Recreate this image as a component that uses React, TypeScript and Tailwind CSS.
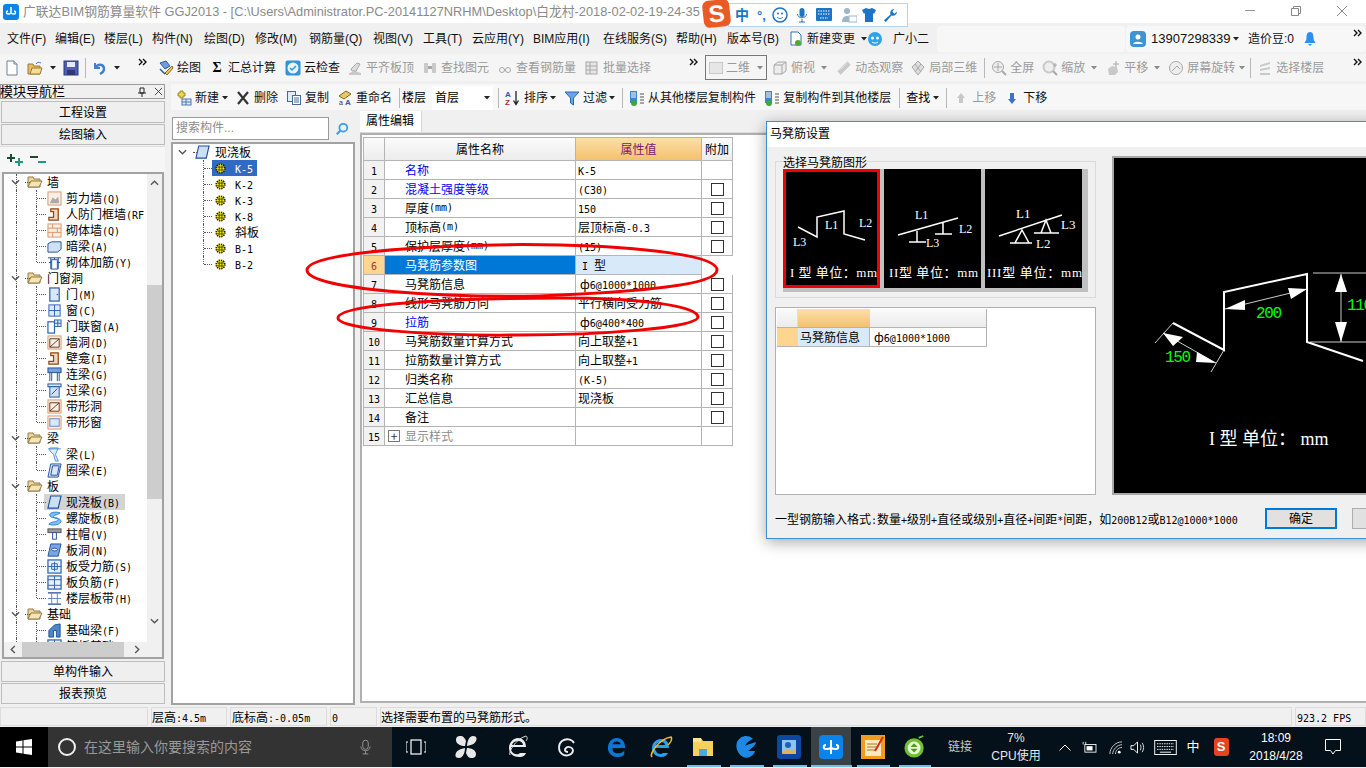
import React from "react";

const Sim = ({ t }: { t: string }) => (
  <>
    {t.split(/([\x00-\x7f]+)/).map((p, i) =>
      /^[\x00-\x7f]+$/.test(p) ? (
        <span key={i} className="text-[10px] [font-family:'DejaVu_Sans_Mono',monospace]">{p}</span>
      ) : (
        <span key={i}>{p}</span>
      )
    )}
  </>
);

const Ic = ({ children, cls = "w-4 h-4" }: { children: React.ReactNode; cls?: string }) => (
  <svg viewBox="0 0 16 16" className={"shrink-0 " + cls}>{children}</svg>
);

const Arrow = ({ cls = "", gray = false }: { cls?: string; gray?: boolean }) => (
  <svg viewBox="0 0 6 4" className={"w-[6px] h-[4px] shrink-0 " + cls}>
    <path d="M0 0h6L3 3.5z" fill={gray ? "#8a8a8a" : "#222"} />
  </svg>
);
const Sep = ({ cls = "" }: { cls?: string }) => <div className={"w-px h-5 bg-[#b8b8b8] shrink-0 " + cls} />;
const More = ({ cls = "" }: { cls?: string }) => (
  <svg viewBox="0 0 10 8" className={"w-[10px] h-2 shrink-0 " + cls}>
    <path d="M1 1l3 3-3 3M5 1l3 3-3 3" fill="none" stroke="#111" strokeWidth="1.4" />
  </svg>
);

const Tool = ({ icon, label, gray, cls = "" }: { icon: React.ReactNode; label: string; gray?: boolean; cls?: string }) => (
  <div className={"flex items-center shrink-0 " + cls + (gray ? " text-[#9a9a9a]" : " text-[#111]")}>
    <span className="w-4 h-4 -ml-[3px] mr-[3px] flex items-center justify-center shrink-0">{icon}</span>
    <span>{label}</span>
  </div>
);

const gFill = "#c9c9c9";
const gStroke = "#a8a8a8";
const I = {
  doc: <Ic><path d="M3 1h7l3 3v11H3z" fill="#fff" stroke="#6d7f95" /><path d="M10 1v3h3" fill="#dfe6ee" stroke="#6d7f95" /></Ic>,
  open: <Ic><path d="M1 4h5l1 2h6v8H1z" fill="#e6bc66" stroke="#9c7a30" /><path d="M3 14l2-6h10l-2 6z" fill="#f5dc98" stroke="#9c7a30" /><path d="M9 4c1-2 3-2 5-1" fill="none" stroke="#3c78c8" /></Ic>,
  save: <Ic><rect x="1" y="1" width="14" height="14" fill="#4d5fb4" stroke="#2d3a80" /><rect x="4" y="2" width="8" height="5" fill="#e6e9f5" /><rect x="4" y="10" width="8" height="5" fill="#30386e" /></Ic>,
  undo: <Ic><path d="M4 3v5h5" fill="none" stroke="#3f7fd2" strokeWidth="2" /><path d="M4 8c3-5 9-4 9 1 0 3-2 4-4 5" fill="none" stroke="#3f7fd2" strokeWidth="2.4" /></Ic>,
  draw: <Ic><path d="M2 3l6-2 4 5-5 3z" fill="#6f9fd8" stroke="#2c5a9a" /><path d="M7 13l7-7 1 2-6 7z" fill="#f0c050" stroke="#8a6a20" /><path d="M2 9l5 5" stroke="#2c5a9a" strokeWidth="1.5" /></Ic>,
  sum: <span className="font-bold text-[14px] leading-none [font-family:'Liberation_Serif',serif] text-black">Σ</span>,
  cloud: <Ic><rect x="0.5" y="0.5" width="15" height="15" rx="2" fill="#2f94dc" /><circle cx="8" cy="8" r="5.5" fill="#e9f5fd" /><path d="M5 8l2 2 4-4" fill="none" stroke="#2f94dc" strokeWidth="1.5" /></Ic>,
  g1: <Ic><path d="M2 13l6-2 6 2v2H2z" fill={gFill} /><path d="M4 9l6-6 3 1-4 7H5z" fill="#dcdcdc" stroke={gStroke} /></Ic>,
  g2: <Ic><rect x="2" y="3" width="4" height="10" rx="1" fill={gFill} /><rect x="10" y="3" width="4" height="10" rx="1" fill={gFill} /><rect x="6" y="6" width="4" height="3" fill={gStroke} /></Ic>,
  g3: <Ic><circle cx="5" cy="10" r="2.5" fill="none" stroke={gStroke} /><circle cx="11" cy="10" r="2.5" fill="none" stroke={gStroke} /><path d="M7 10h2" stroke={gStroke} /></Ic>,
  g4: <Ic><rect x="2" y="2" width="11" height="12" fill="#e6e6e6" stroke={gStroke} /><path d="M2 6h11M2 10h11M6 2v12" stroke={gStroke} /></Ic>,
  box: <Ic><path d="M2 5l4-3h8v9l-4 3H2z" fill="#ececec" stroke={gStroke} /><path d="M2 5h8v9M10 5l4-3" fill="none" stroke={gStroke} /></Ic>,
  orbit: <Ic><path d="M3 13L13 3" stroke={gFill} strokeWidth="5" /><path d="M2 10c3-1 8-5 9-8" fill="none" stroke="#e8e8e8" /></Ic>,
  cube3: <Ic><path d="M8 1l6 6-6 8-6-8z" fill="#ddd" stroke={gStroke} /><path d="M5 4l6 8M11 4l-6 8" stroke={gStroke} /></Ic>,
  zoomf: <Ic><circle cx="7" cy="7" r="5.5" fill="#eee" stroke={gStroke} /><path d="M7 3v8M3 7h8" stroke={gStroke} /><path d="M11 11l4 4" stroke={gStroke} strokeWidth="2" /></Ic>,
  zoom: <Ic><circle cx="7" cy="7" r="5.5" fill="#eee" stroke={gFill} strokeWidth="2" /><path d="M11 11l4 4" stroke={gStroke} strokeWidth="2" /><path d="M13 3v4M11 5h4" stroke={gStroke} /></Ic>,
  pan: <Ic><path d="M4 15l-1-6 4-3 5 1 1 5-3 3z" fill={gFill} /><path d="M11 1v6M8 4h6" stroke={gStroke} /></Ic>,
  rot: <Ic><circle cx="8" cy="8" r="6.5" fill="#eee" stroke={gStroke} /><path d="M4 11l5-5 3 3" fill="none" stroke={gStroke} /></Ic>,
  layers: <Ic><path d="M3 5l10-3v2L3 7zM3 9l10-2v2L3 11zM3 13h10v2H3z" fill={gFill} /></Ic>,
  nw: <Ic><path d="M4 1h3v2h2v3H7v2H4V6H2V3h2z" fill="#f2d64b" stroke="#a08820" /><rect x="6" y="9" width="9" height="6" fill="#dfeaf8" stroke="#5078b0" /><path d="M6 12h9M10 9v6" stroke="#5078b0" /></Ic>,
  del: <Ic><path d="M3 2l10 12M13 2L3 14" stroke="#333" strokeWidth="2.2" /></Ic>,
  copy: <Ic><rect x="1.5" y="1.5" width="8" height="10" fill="#e0ebf8" stroke="#44699c" /><rect x="6.5" y="5.5" width="8" height="9" fill="#fff" stroke="#44699c" /><path d="M8 8h5M8 10h5M8 12h5" stroke="#44699c" /></Ic>,
  ren: <Ic><path d="M2 6l7-5 5 3-7 5z" fill="#e8c860" stroke="#806a20" /><text x="2" y="15" fontSize="7" fill="#333">a</text><text x="8" y="15" fontSize="8" fontWeight="700" fill="#2a5ab0">A</text></Ic>,
  sort: <Ic><text x="0" y="7" fontSize="8" fontWeight="700" fill="#2858b0" fontFamily="Liberation Sans">A</text><text x="0" y="15" fontSize="8" fontWeight="700" fill="#a03030" fontFamily="Liberation Sans">Z</text><path d="M11 1v12M8.5 10.5l2.5 4 2.5-4" fill="none" stroke="#222" strokeWidth="1.3" /></Ic>,
  filter: <Ic><path d="M1 2h14L9.5 8v7l-3-2V8z" fill="#66a6e8" stroke="#2b69b8" /></Ic>,
  cpy1: <Ic><rect x="1" y="1" width="7" height="12" fill="#3c86d0" /><path d="M2 3h5M2 5h5M2 7h5" stroke="#fff" /><circle cx="5" cy="13" r="3" fill="#3aa83a" /><path d="M11 4h4M11 7h4M11 10h4M11 13h4" stroke="#555" /></Ic>,
  up: <Ic><path d="M8 3l4 5h-2v5H6V8H4z" fill="#c8c8c8" /></Ic>,
  down: <Ic><path d="M8 14l4-5h-2V3H6v6H4z" fill="#3f6fd0" /></Ic>,
};

const menu: [string, string][] = [
  ["文件(F)", "w-[48px]"], ["编辑(E)", "w-[49px]"], ["楼层(L)", "w-[48px]"], ["构件(N)", "w-[52px]"], ["绘图(D)", "w-[51px]"],
  ["修改(M)", "w-[54px]"], ["钢筋量(Q)", "w-[64px]"], ["视图(V)", "w-[50px]"], ["工具(T)", "w-[49px]"], ["云应用(Y)", "w-[61px]"],
  ["BIM应用(I)", "w-[70px]"], ["在线服务(S)", "w-[73px]"], ["帮助(H)", "w-[51px]"], ["版本号(B)", "w-[60px]"],
];

const Brick = ({ v }: { v: number }) => (
  <Ic cls="w-[15px] h-[15px]">
    <rect x="1" y="1" width="14" height="14" fill="#fbeee2" stroke="#d89468" />
    {v === 0 && <path d="M3 13l3-6 3 2 3-3 1 7z" fill="#aaa" />}
    {v === 1 && <path d="M1 5.5h14M1 10h14M6 1v4.5M11 5.5V10M6 10v5" stroke="#d89468" />}
    {v === 2 && <path d="M3 13L13 4M3 4h10v9H3z" fill="none" stroke="#5b3a20" />}
    {v === 3 && <rect x="3" y="4" width="10" height="8" fill="#dbe8fa" stroke="#5f86c8" />}
  </Ic>
);
const J = <Ic cls="w-[15px] h-[15px]"><path d="M4 2h8v12H2v-3h5V5H4z" fill="#f3d8bf" stroke="#8a4a18" strokeWidth="1.3" /></Ic>;
const Blue = ({ v }: { v: number }) => (
  <Ic cls="w-[15px] h-[15px]">
    {v === 0 && <path d="M1 14V5l4-2h10v8l-4 3z" fill="#cfe0f4" stroke="#1f4f9a" />}
    {v === 1 && <><path d="M1 3h14M2 8h12" stroke="#1f4f9a" /><path d="M4 3v12M8 3v12M12 3v12" stroke="#1f4f9a" /><rect x="5" y="5" width="6" height="10" fill="#fff" stroke="#1f4f9a" /></>}
    {v === 2 && <><rect x="3" y="1" width="10" height="14" fill="#dbe8fa" stroke="#2c62b0" strokeWidth="1.3" /><circle cx="11" cy="8" r="0.8" fill="#2c62b0" /></>}
    {v === 3 && <><rect x="2" y="2" width="12" height="12" fill="#dbe8fa" stroke="#2c62b0" /><path d="M8 2v12M2 8h12" stroke="#2c62b0" /></>}
    {v === 4 && <><rect x="1" y="3" width="7" height="12" fill="#fff" stroke="#2c62b0" strokeWidth="1.3" /><rect x="8" y="1" width="7" height="7" fill="#dbe8fa" stroke="#2c62b0" /><path d="M11.500 1v7M8 4.500h7" stroke="#2c62b0" /></>}
    {v === 5 && <><rect x="1" y="1" width="14" height="5" fill="#7aa0d8" stroke="#1f4f9a" /><path d="M3 6v9M5 6v9M11 6v9M13 6v9" stroke="#1f4f9a" /></>}
    {v === 6 && <><rect x="1" y="1" width="14" height="3" fill="#dbe8fa" stroke="#1f4f9a" /><rect x="3" y="4" width="10" height="11" fill="#cfe0f4" stroke="#1f4f9a" /><path d="M5 12l6-6" stroke="#1f4f9a" /></>}
    {v === 7 && <><path d="M3 1h9L9 8l3 7H9L7 8 3 4z" fill="#dcebfa" stroke="#4a90d8" /><path d="M1 2h14" stroke="#4a90d8" /></>}
    {v === 8 && <path d="M4 1h11l-3 14H1zM6 3h7l-2 10H4z" fill="#d8e6f8" stroke="#1f4f9a" />}
    {v === 9 && <path d="M4 1h11l-3 13H1z" fill="#cbdff6" stroke="#1f4f9a" strokeWidth="1.2" />}
    {v === 10 && <path d="M14 2C8 0 2 2 3 5c1 3 9 1 9 4s-8 2-10 5c4 2 12 1 13-3 0-4-8-2-8-5 0-2 5-2 7-4z" fill="#7ec0f0" stroke="#2b80d0" />}
    {v === 11 && <><rect x="1" y="2" width="14" height="4" fill="#999" stroke="#555" /><rect x="6" y="6" width="4" height="7" fill="#fff" stroke="#1f4f9a" /></>}
    {v === 12 && <><path d="M4 1h11l-3 13H1z" fill="#7aa6e0" stroke="#1f4f9a" /><ellipse cx="8" cy="7" rx="3" ry="1.500" fill="#fff" stroke="#1f4f9a" /></>}
    {v === 13 && <><rect x="1" y="1" width="14" height="14" fill="#e8f0fa" stroke="#2c62b0" strokeWidth="1.3" /><path d="M1 8h14M8 3v10" stroke="#2c62b0" /><path d="M5 5h6v6H5z" fill="none" stroke="#2c62b0" /></>}
    {v === 14 && <><rect x="1" y="1" width="14" height="14" fill="#e8f0fa" stroke="#2c62b0" strokeWidth="1.3" /><path d="M1 5h14M1 11h14M8 1v14" stroke="#2c62b0" /></>}
    {v === 15 && <><path d="M1 2h14M1 14h14" stroke="#1f4f9a" strokeWidth="1.5" /><path d="M5 2v12M11 2v12M1 8h14" stroke="#5a86c8" /></>}
    {v === 16 && <path d="M2 15V8l6-6 6-1v14h-4V8H7v7z" fill="#4d85c8" stroke="#1f4f9a" />}
  </Ic>
);

type T = { g?: boolean; t: string; i?: React.ReactNode; last?: boolean; sel?: boolean };
const leftTree: T[] = [
  { g: true, t: "墙" },
  { t: "剪力墙(Q)", i: <Brick v={0} /> },
  { t: "人防门框墙(RF", i: J },
  { t: "砌体墙(Q)", i: <Brick v={1} /> },
  { t: "暗梁(A)", i: <Blue v={0} /> },
  { t: "砌体加筋(Y)", i: <Blue v={1} />, last: true },
  { g: true, t: "门窗洞" },
  { t: "门(M)", i: <Blue v={2} /> },
  { t: "窗(C)", i: <Blue v={3} /> },
  { t: "门联窗(A)", i: <Blue v={4} /> },
  { t: "墙洞(D)", i: <Brick v={2} /> },
  { t: "壁龛(I)", i: J },
  { t: "连梁(G)", i: <Blue v={5} /> },
  { t: "过梁(G)", i: <Blue v={6} /> },
  { t: "带形洞", i: <Brick v={2} /> },
  { t: "带形窗", i: <Brick v={3} />, last: true },
  { g: true, t: "梁" },
  { t: "梁(L)", i: <Blue v={7} /> },
  { t: "圈梁(E)", i: <Blue v={8} />, last: true },
  { g: true, t: "板" },
  { t: "现浇板(B)", i: <Blue v={9} />, sel: true },
  { t: "螺旋板(B)", i: <Blue v={10} /> },
  { t: "柱帽(V)", i: <Blue v={11} /> },
  { t: "板洞(N)", i: <Blue v={12} /> },
  { t: "板受力筋(S)", i: <Blue v={13} /> },
  { t: "板负筋(F)", i: <Blue v={14} /> },
  { t: "楼层板带(H)", i: <Blue v={15} />, last: true },
  { g: true, t: "基础" },
  { t: "基础梁(F)", i: <Blue v={16} /> },
  { t: "筏板基础(M)", i: <Blue v={14} /> },
];

const Chev = ({ cls = "" }: { cls?: string }) => (
  <svg viewBox="0 0 10 6" className={"w-[9px] h-[6px] shrink-0 " + cls}>
    <path d="M1 1l4 4 4-4" fill="none" stroke="#555" strokeWidth="1.500" />
  </svg>
);
const Folder = () => (
  <svg viewBox="0 0 16 12" className="w-4 h-3 shrink-0">
    <path d="M1 1h5l1 2h6v8H1z" fill="#f2d58a" stroke="#8f7a50" />
    <path d="M1 11l3-6h11l-3 6z" fill="#f7e6b4" stroke="#8f7a50" />
  </svg>
);
const Dash = ({ cls }: { cls: string }) => <div className={"absolute border-[#555] border-dotted " + cls} />;

const LeftRow = ({ r, groupLine }: { r: T; groupLine: boolean }) => (
  <div className="relative h-4 flex items-center text-black text-[12px]">
    {groupLine && <Dash cls="left-[12px] top-0 h-4 border-l" />}
    {r.g ? (
      <>
        <Chev cls="ml-[7px]" />
        <Dash cls="left-[21px] top-[8px] w-[5px] border-t" />
        <span className="ml-[7px]"><Folder /></span>
        <span className="ml-[4px]"><Sim t={r.t} /></span>
      </>
    ) : (
      <>
        <Dash cls={r.last ? "left-[32px] top-0 h-2 border-l" : "left-[32px] top-0 h-4 border-l"} />
        <Dash cls="left-[33px] top-[8px] w-[9px] border-t" />
        <div className={"ml-[40px] flex items-center h-4 pl-[3px] w-[81px] " + (r.sel ? "bg-[#d4d4d4]" : "")}>
          {r.i}
          <span className="ml-[4px] whitespace-nowrap"><Sim t={r.t} /></span>
        </div>
      </>
    )}
  </div>
);

const Rebar = () => (
  <svg viewBox="0 0 12 12" className="w-[11px] h-[11px] shrink-0">
    <circle cx="6" cy="6" r="4.800" fill="#f7e600" stroke="#111" strokeWidth="1.500" strokeDasharray="1.500 1" />
    <path d="M2.500 4.500h7M2.500 7.500h7M4.500 2.500v7M7.500 2.500v7" stroke="#222" strokeWidth="0.800" />
  </svg>
);

const rows: { n: number; a: string; b: string; cb: boolean; c?: string; bx?: string }[] = [
  { n: 1, a: "名称", b: "K-5", cb: false, c: "text-[#0000ff]" },
  { n: 2, a: "混凝土强度等级", b: "(C30)", cb: true, c: "text-[#0000ff]" },
  { n: 3, a: "厚度(mm)", b: "150", cb: true },
  { n: 4, a: "顶标高(m)", b: "层顶标高-0.3", cb: true },
  { n: 5, a: "保护层厚度(mm)", b: "(15)", cb: true },
  { n: 6, a: "马凳筋参数图", b: "I 型", cb: false },
  { n: 7, a: "马凳筋信息", b: "ф6@1000*1000", cb: true, bx: "pl-[4px]" },
  { n: 8, a: "线形马凳筋方向", b: "平行横向受力筋", cb: true },
  { n: 9, a: "拉筋", b: "ф6@400*400", cb: true, c: "text-[#0000ff]", bx: "pl-[4px]" },
  { n: 10, a: "马凳筋数量计算方式", b: "向上取整+1", cb: true },
  { n: 11, a: "拉筋数量计算方式", b: "向上取整+1", cb: true },
  { n: 12, a: "归类名称", b: "(K-5)", cb: true },
  { n: 13, a: "汇总信息", b: "现浇板", cb: true },
  { n: 14, a: "备注", b: "", cb: true },
  { n: 15, a: "显示样式", b: "", cb: false, c: "text-[#8c8c8c]" },
];

const Row = ({ r }: { r: (typeof rows)[number] }) => {
  const sel = r.n === 6;
  return (
    <div className="flex h-[19px] text-[12px] leading-[18px] text-black">
      <div className={"w-[21px] border-r border-b border-[#b4b4b4] text-center " + (sel ? "bg-[#ffd58f] text-[#b03020]" : "bg-[#f2f2f2]")}><Sim t={String(r.n)} /></div>
      <div className={"w-[191px] border-r border-b border-[#b4b4b4] flex items-center whitespace-nowrap " + (sel ? "bg-[#0078d7] text-white pl-[20px]" : "pl-[20px] " + (r.c ?? ""))}>
        {r.n === 15 && (
          <span className="w-[12px] h-[12px] border border-[#777] -ml-[17px] mr-[5px] flex items-center justify-center text-[#333] text-[12px] leading-none">+</span>
        )}
        <Sim t={r.a} />
      </div>
      <div className={"w-[126px] border-r border-b border-[#b4b4b4] whitespace-nowrap overflow-hidden " + (sel ? "bg-[#d8e9f9] pl-[6px]" : r.bx ?? "pl-[2px]")}>
        <Sim t={r.b} />
      </div>
      {!sel && (
        <div className="w-[31px] border-r border-b border-[#b4b4b4] flex items-center justify-center">
          {r.cb && <span className="w-[13px] h-[13px] border border-[#333] bg-white ml-[1px]" />}
        </div>
      )}
    </div>
  );
};

const Thumb = ({ x, y, sel, children }: { x: number; y: number; sel?: boolean; children: React.ReactNode }) => (
  <svg viewBox={`${x} ${y} 97 119`} className={"w-[97px] h-[119px] shrink-0 bg-black"}>
    {children}
    {sel && <rect x={x + 1.5} y={y + 1.5} width="94" height="116" fill="none" stroke="#f00000" strokeWidth="3" />}
  </svg>
);
const TL = ({ x, y, t, s = 12 }: { x: number; y: number; t: string; s?: number }) => (
  <text x={x} y={y} fontSize={s} fill="#fff" fontFamily="Liberation Serif, Noto Sans CJK SC, serif">{t}</text>
);
const TB = ({ x, t, w }: { x: number; t: string; w: number }) => (
  <text x={x} y="277" fontSize="13" fill="#fff" fontFamily="Liberation Serif, Noto Sans CJK SC, serif" xmlSpace="preserve" textLength={w}>{t}</text>
);

const W = "#fff";
const Btn = ({ t }: { t: string }) => <div className="bg-[#efefef] border border-[#bdbdbd] flex items-center justify-center pt-px text-[12px] text-black h-full">{t}</div>;

export default function App() {
  const base = "[font-family:'Liberation_Sans','Noto_Sans_CJK_SC',sans-serif]";
  const sim = "[font-family:'Noto_Sans_CJK_SC',sans-serif]";
  return (
    <div className={"relative w-[1366px] h-[768px] overflow-hidden bg-[#f0f0f0] flex flex-col text-[12px] " + base}>
      {/* title bar */}
      <div className="h-[23px] bg-white flex items-center shrink-0">
        <div className="ml-[3px] w-4 h-4 rounded-[3px] bg-[#0a84e8] flex items-center justify-center">
          <svg viewBox="0 0 12 12" className="w-3 h-3"><path d="M6 1v6M3 5c-2 0-2 3 0 3s3-1 3-1 1 1 3 1 2-3 0-3" fill="none" stroke="#fff" strokeWidth="1.500" /></svg>
        </div>
        <div className="ml-[4px] text-[12.8px] text-[#8a8a8a] whitespace-nowrap">广联达BIM钢筋算量软件 GGJ2013 - [C:\Users\Administrator.PC-20141127NRHM\Desktop\白龙村-2018-02-02-19-24-35</div>
        <div className="ml-auto flex items-center mr-[19px] gap-[36px] -mt-[2px]">
          <div className="w-[10px] h-px bg-[#999]" />
          <svg viewBox="0 0 10 10" className="w-[10px] h-[10px]"><path d="M2.500 2.500V.5h7v7h-2M.5 2.500h7v7h-7z" fill="none" stroke="#888" /></svg>
          <svg viewBox="0 0 10 10" className="w-[10px] h-[10px]"><path d="M0 0l10 10M10 0L0 10" stroke="#888" /></svg>
        </div>
      </div>

      {/* menu */}
      <div className="h-[30px] pt-px flex items-center shrink-0 text-[#111] whitespace-nowrap pl-[7px]">
        {menu.map(([t, w]) => (<div key={t} className={w + " shrink-0"}>{t}</div>))}
        <svg viewBox="0 0 16 16" className="w-4 h-4 shrink-0 ml-[1px]"><path d="M3 1h7l3 3v10H3z" fill="#fff" stroke="#2f76c0" /><circle cx="10" cy="12" r="3" fill="#58a636" /></svg>
        <span className="ml-[3px] w-[49px] shrink-0">新建变更</span>
        <Arrow cls="ml-[5px]" />
        <svg viewBox="0 0 16 16" className="w-4 h-4 shrink-0"><circle cx="8" cy="8" r="7" fill="#2ba3ee" /><circle cx="5.500" cy="7" r="1.500" fill="#fff" /><circle cx="10.500" cy="7" r="1.500" fill="#fff" /><path d="M5 11c2 1.500 4 1.500 6 0" stroke="#fff" fill="none" /></svg>
        <span className="ml-[10px] shrink-0">广小二</span>
        <div className="ml-[8px] w-[188px] h-[26px] bg-[#f7f7f7] rounded-sm shrink-0" />
        <div className="ml-px flex-1 h-[26px] bg-[#f7f7f7] rounded-sm flex items-center">
          <div className="ml-[4px] w-4 h-4 rounded-sm bg-[#3d94d4] flex items-center justify-center shrink-0">
            <svg viewBox="0 0 12 12" className="w-3 h-3"><circle cx="6" cy="4" r="2.500" fill="#fff" /><path d="M1 11c1-3 9-3 10 0z" fill="#fff" /></svg>
          </div>
          <span className="ml-[5px] w-[76px] text-[13px] shrink-0">13907298339</span>
          <Arrow cls="ml-[6px]" />
          <span className="ml-[9px] shrink-0">造价豆:0</span>
          <svg viewBox="0 0 12 16" className="w-3 h-4 ml-[10px] shrink-0"><path d="M6 1c3 0 3.500 3 3.500 6s2 4 2 5h-11c0-1 2-2 2-5S3 1 6 1z" fill="#2c8ff0" /><path d="M4 13h4l-2 2z" fill="#2c8ff0" /></svg>
          <More cls="ml-[37px] -mt-3" />
        </div>
      </div>

      {/* toolbar 1 */}
      <div className="h-[27px] mt-px mb-[2px] flex items-center shrink-0 bg-[#f5f5f5] whitespace-nowrap">
        <span className="ml-[4px]">{I.doc}</span>
        <span className="ml-[7px]">{I.open}</span>
        <Arrow cls="ml-[7px]" />
        <span className="ml-[7px]">{I.save}</span>
        <Sep cls="ml-[6px]" />
        <span className="ml-[5px]">{I.undo}</span>
        <Arrow cls="ml-[7px]" />
        <More cls="ml-[18px] -mt-3" />
        <Tool cls="ml-[13px]" icon={I.draw} label="绘图" />
        <Tool cls="ml-[11px]" icon={I.sum} label="汇总计算" />
        <Tool cls="ml-[12px]" icon={I.cloud} label="云检查" />
        <Tool cls="ml-[10px]" gray icon={I.g1} label="平齐板顶" />
        <Tool cls="ml-[11px]" gray icon={I.g2} label="查找图元" />
        <Tool cls="ml-[11px]" gray icon={I.g3} label="查看钢筋量" />
        <Tool cls="ml-[11px]" gray icon={I.g4} label="批量选择" />
        <More cls="ml-[38px] -mt-3" />
        <div className="ml-[6px] w-[62px] h-[25px] border border-[#777] flex items-center text-[#9a9a9a] shrink-0">
          <span className="ml-[3px] w-[14px] h-[12px] bg-[#e6e6e6] border border-[#c8c8c8]" />
          <span className="ml-[3px]">二维</span>
          <Arrow gray cls="ml-[7px]" />
        </div>
        <Tool cls="ml-[8px]" gray icon={I.box} label="俯视" />
        <Arrow gray cls="ml-[6px]" />
        <Tool cls="ml-[12px]" gray icon={I.orbit} label="动态观察" />
        <Tool cls="ml-[10px]" gray icon={I.cube3} label="局部三维" />
        <Sep cls="ml-[7px]" />
        <Tool cls="ml-[9px]" gray icon={I.zoomf} label="全屏" />
        <Tool cls="ml-[11px]" gray icon={I.zoom} label="缩放" />
        <Arrow gray cls="ml-[6px]" />
        <Tool cls="ml-[11px]" gray icon={I.pan} label="平移" />
        <Arrow gray cls="ml-[6px]" />
        <Tool cls="ml-[11px]" gray icon={I.rot} label="屏幕旋转" />
        <Arrow gray cls="ml-[4px]" />
        <Sep cls="ml-[5px]" />
        <Tool cls="ml-[9px]" gray icon={I.layers} label="选择楼层" />
        <More cls="ml-[29px] -mt-3" />
      </div>

      {/* main */}
      <div className="h-[622px] flex shrink-0 pt-px">
        {/* left panel */}
        <div className="w-[165px] shrink-0 flex flex-col">
          <div className="h-[15px] border border-[#9a9a9a] bg-[#f0f0f0] flex items-center shrink-0">
            <span className="text-[13px] leading-none ml-[-1px]">模块导航栏</span>
            <svg viewBox="0 0 10 10" className="w-[10px] h-[10px] ml-[72px]"><path d="M3 1h4v5H3zM1 6h8M5 6v4" fill="none" stroke="#222" /></svg>
            <svg viewBox="0 0 10 10" className="w-[9px] h-[9px] ml-[7px]"><path d="M1 1l8 8M9 1L1 9" stroke="#333" /></svg>
          </div>
          <div className="h-[22px] mt-[2px] shrink-0 ml-px"><Btn t="工程设置" /></div>
          <div className="h-[21px] mt-px shrink-0 ml-px"><Btn t="绘图输入" /></div>
          <div className="h-[26px] mt-px shrink-0 flex items-center bg-[#f6f6f6] border-t border-[#ddd]">
            <svg viewBox="0 0 18 14" className="w-[18px] h-[14px] ml-[6px]"><path d="M5 1v8M1 5h8" stroke="#1d4a30" strokeWidth="2" /><path d="M13 5v8M9 9h8" stroke="#1f9a80" strokeWidth="2" /></svg>
            <svg viewBox="0 0 18 14" className="w-[18px] h-[14px] ml-[5px]"><path d="M1 4h8" stroke="#1d4a30" strokeWidth="2" /><path d="M9 9h8" stroke="#1f9a80" strokeWidth="2" /></svg>
          </div>
          <div className="h-[487px] shrink-0 ml-[2px] mr-px border-2 border-[#a2a2a2] flex flex-col bg-white">
            <div className="h-[468px] flex shrink-0 overflow-hidden">
              <div className={"w-[143px] shrink-0 overflow-hidden " + sim}>
                {leftTree.map((r, i) => {
                  const nextG = leftTree.slice(i + 1).findIndex((x) => x.g);
                  return <LeftRow key={i} r={r} groupLine={nextG >= 0 || i >= 27} />;
                })}
              </div>
              <div className="w-[15px] shrink-0 bg-[#f0f0f0] flex flex-col items-center">
                <svg viewBox="0 0 10 6" className="w-[9px] h-[6px] mt-[6px]"><path d="M1 5l4-4 4 4" fill="none" stroke="#555" strokeWidth="1.500" /></svg>
                <div className="w-full h-[214px] bg-[#cdcdcd] mt-[99px]" />
                <Chev cls="mt-[119px]" />
              </div>
            </div>
            <div className="h-[15px] bg-[#f0f0f0] flex items-center shrink-0">
              <svg viewBox="0 0 6 10" className="w-[6px] h-[9px] ml-[6px]"><path d="M5 1L1 5l4 4" fill="none" stroke="#555" strokeWidth="1.500" /></svg>
              <div className="w-[102px] h-full bg-[#cdcdcd] ml-[6px]" />
              <svg viewBox="0 0 6 10" className="w-[6px] h-[9px] ml-[10px]"><path d="M1 1l4 4-4 4" fill="none" stroke="#555" strokeWidth="1.500" /></svg>
            </div>
          </div>
          <div className="h-[21px] mt-[2px] shrink-0 ml-px"><Btn t="单构件输入" /></div>
          <div className="h-[21px] mt-px shrink-0 ml-px"><Btn t="报表预览" /></div>
        </div>

        {/* right column */}
        <div className="ml-[6px] flex-1 flex flex-col min-w-0">
          <div className="h-[26px] pt-px flex items-center shrink-0 bg-[#f7f7f7] whitespace-nowrap">
            <Tool cls="ml-[8px]" icon={I.nw} label="新建" />
            <Arrow cls="ml-[3px]" />
            <Tool cls="ml-[10px]" icon={I.del} label="删除" />
            <Tool cls="ml-[11px]" icon={I.copy} label="复制" />
            <Tool cls="ml-[11px]" icon={I.ren} label="重命名" />
            <Sep cls="ml-[7px]" />
            <span className="ml-[2px]">楼层</span>
            <div className="ml-[6px] w-[61px] h-[24px] bg-white flex items-center shrink-0">
              <span className="ml-[3px]">首层</span>
              <Arrow cls="ml-[25px]" />
            </div>
            <Sep cls="ml-[5px]" />
            <Tool cls="ml-[9px]" icon={I.sort} label="排序" />
            <Arrow cls="ml-[2px]" />
            <Tool cls="ml-[11px]" icon={I.filter} label="过滤" />
            <Arrow cls="ml-[2px]" />
            <Sep cls="ml-[7px]" />
            <Tool cls="ml-[9px]" icon={I.cpy1} label="从其他楼层复制构件" />
            <Tool cls="ml-[11px]" icon={I.cpy1} label="复制构件到其他楼层" />
            <Sep cls="ml-[8px]" />
            <span className="ml-[6px]">查找</span>
            <Arrow cls="ml-[3px]" />
            <Sep cls="ml-[7px]" />
            <Tool cls="ml-[9px]" gray icon={I.up} label="上移" />
            <Tool cls="ml-[11px]" icon={I.down} label="下移" />
          </div>
          <div className="flex-1 flex min-h-0">
            {/* component list */}
            <div className="w-[184px] shrink-0 flex flex-col">
              <div className="h-[23px] mt-[7px] flex items-center shrink-0">
                <div className="ml-px w-[157px] h-[23px] border border-[#9a9a9a] bg-white text-[#8c8c8c] pl-[3px] leading-[21px] text-[12px]">搜索构件...</div>
                <svg viewBox="0 0 16 16" className="w-[14px] h-[14px] ml-[6px]"><circle cx="9.500" cy="6.500" r="4.500" fill="#e4f3fd" stroke="#3f9ae0" strokeWidth="2" /><path d="M6 10l-4 4" stroke="#3f9ae0" strokeWidth="2.500" /></svg>
              </div>
              <div className={"h-[563px] mt-[2px] border-2 border-[#a2a2a2] bg-white shrink-0 " + sim}>
                <div className="h-4 flex items-center relative">
                  <Chev cls="ml-[5px]" />
                  <Dash cls="left-[20px] top-[8px] w-[4px] border-t" />
                  <span className="ml-[8px]"><Blue v={9} /></span>
                  <span className="ml-[5px]">现浇板</span>
                </div>
                {["K-5", "K-2", "K-3", "K-8", "斜板", "B-1", "B-2"].map((t, i) => (
                  <div key={t} className="h-4 flex items-center relative">
                    <Dash cls={i === 6 ? "left-[30px] top-0 h-2 border-l" : "left-[30px] top-0 h-4 border-l"} />
                    <Dash cls="left-[31px] top-[8px] w-[8px] border-t" />
                    <div className={"ml-[39px] flex items-center h-4 pl-[3px] " + (i === 0 ? "bg-[#2f6bc4] text-white w-[45px]" : "w-[45px] text-black")}>
                      <Rebar />
                      <span className="ml-[9px] whitespace-nowrap"><Sim t={t} /></span>
                    </div>
                  </div>
                ))}
              </div>
            </div>

            {/* properties */}
            <div className="flex-1 ml-[5px] flex flex-col min-w-0">
              <div className="h-[23px] shrink-0 flex items-end border-b border-[#dcdcdc]">
                <div className="w-[62px] h-[21px] bg-white border-r border-[#d8d8d8] pl-[6px] text-[12px] leading-[20px]">属性编辑</div>
              </div>
              <div className="h-[570px] bg-white border-t-2 border-l-2 border-b-2 border-[#b0b0b0] pt-[2px] pl-px shrink-0">
                <div className={"w-[370px] border-l border-t border-[#b4b4b4] " + sim}>
                  <div className="flex h-[23px] text-[12px] leading-[22px] text-black">
                    <div className="w-[21px] border-r border-b border-[#b4b4b4] bg-gradient-to-b from-[#fbfbfb] to-[#ececec]" />
                    <div className="w-[191px] border-r border-b border-[#b4b4b4] bg-gradient-to-b from-[#fbfbfb] to-[#ececec] text-center">属性名称</div>
                    <div className="w-[126px] border-r border-b border-[#b4b4b4] bg-gradient-to-b from-[#fbdfa9] to-[#f3c26b] text-center text-[#7a1a6e]">属性值</div>
                    <div className="w-[31px] border-r border-b border-[#b4b4b4] bg-gradient-to-b from-[#fbfbfb] to-[#ececec] text-center">附加</div>
                  </div>
                  {rows.map((r) => <Row key={r.n} r={r} />)}
                </div>
              </div>
            </div>
          </div>
        </div>
      </div>

      {/* status bar */}
      <div className="h-[22px] shrink-0 flex pt-[2px] pb-px gap-[3px] text-[12px] text-black">
        <div className="w-[148px] border border-[#dcdcdc]" />
        <div className={"w-[76px] border border-[#dcdcdc] leading-[17px] " + sim}><Sim t="层高:4.5m" /></div>
        <div className={"w-[97px] border border-[#dcdcdc] pl-px leading-[17px] " + sim}><Sim t="底标高:-0.05m" /></div>
        <div className={"w-[47px] border border-[#dcdcdc] pl-px leading-[17px] " + sim}><Sim t="0" /></div>
        <div className={"w-[912px] border border-[#dcdcdc] leading-[17px] " + sim}>选择需要布置的马凳筋形式。</div>
        <div className={"flex-1 border border-[#dcdcdc] pl-px leading-[17px] " + sim}><Sim t="923.2 FPS" /></div>
      </div>

      {/* taskbar */}
      <div className="h-[40px] shrink-0 bg-[#05111a] flex items-center text-white relative">
        <div className="w-[48px] h-full bg-black flex items-center justify-center">
          <svg viewBox="0 0 16 16" className="w-4 h-4"><path d="M0 2.500l6.500-1v6H0zM7.500 1.300L16 0v7.500H7.500zM0 8.500h6.500v6L0 13.500zM7.500 8.500H16V16l-8.500-1.300z" fill="#fff" /></svg>
        </div>
        <div className="w-[344px] h-full bg-[#333] flex items-center">
          <span className="ml-[10px] w-[18px] h-[18px] rounded-full border-2 border-[#eee]" />
          <span className="ml-[8px] pt-px text-[14px] text-[#999] w-[272px]">在这里输入你要搜索的内容</span>
          <svg viewBox="0 0 12 18" className="w-[11px] h-[17px] ml-[4px]"><rect x="3" y="1" width="6" height="10" rx="3" fill="none" stroke="#999" /><path d="M1 8c0 6 10 6 10 0M6 13v3M3 16h6" fill="none" stroke="#999" /></svg>
        </div>
        <div className="ml-[3px] w-[42px] flex justify-center">
          <svg viewBox="0 0 20 16" className="w-5 h-4"><rect x="5" y="1" width="10" height="14" fill="none" stroke="#fff" strokeWidth="1.200" /><path d="M2 3H0v10h2M18 3h2v10h-2" fill="none" stroke="#fff" /></svg>
        </div>
        <div className="w-[58px] flex justify-center">
          <svg viewBox="0 0 22 24" className="w-[22px] h-6"><path d="M10 11C6 11 1 9 1 5s3-4 5-4 4 2 5 5zM12 11c0-4 2-10 6-10s4 3 3 5-3 4-9 5zM12 13c4 0 9 2 9 6s-3 4-5 4-4-2-5-5zM10 13c0 4-2 10-6 10s-4-3-3-5 3-4 9-5z" fill="#e8e8e8" /></svg>
        </div>
        <div className="w-[46px] flex justify-center">
          <svg viewBox="0 0 22 24" className="w-[22px] h-6"><path d="M4 12h15C19 6 15 3 11 3S2 7 2 13s5 9 10 9 6-2 7-4h-6c-2 2-7 2-9-3v-3z M5 10c1-3 3-4 6-4s5 2 5 4z" fill="#eee" fillRule="evenodd" /><path d="M3 20C1 18 8 4 19 1c2 1 1 4 0 5" fill="none" stroke="#ddd" /></svg>
        </div>
        <div className="w-[52px] flex justify-center">
          <svg viewBox="0 0 20 20" className="w-5 h-5"><path d="M17 6C15 2 9 1 5 4s-4 10 0 13 10 1 11-3c0-4-5-5-7-3s-1 4 2 4" fill="none" stroke="#eee" strokeWidth="1.800" /></svg>
        </div>
        <div className="w-[48px] flex justify-center">
          <svg viewBox="0 0 22 24" className="w-5 h-6"><path d="M3 13h17C20 6 16 2 11 2 5 2 1 7 1 13s5 10 11 10c4 0 6-1 7-3v-4c-2 2-4 3-7 3-5 0-6-3-6-6z M6 9c1-3 3-3 5-3s4 1 4 3z" fill="#0b78d7" fillRule="evenodd" /></svg>
        </div>
        <div className="w-[40px] flex justify-center">
          <svg viewBox="0 0 24 24" className="w-6 h-6"><path d="M5 13h15C20 7 17 4 12 4 7 4 3 8 3 13s4 9 9 9c4 0 6-2 7-4h-5c-2 2-6 1-7-2z M7 10c1-2 3-3 5-3s4 1 4 3z" fill="#2aa0e8" fillRule="evenodd" /><path d="M3 22C0 19 10 4 22 2c2 3-1 6-3 8" fill="none" stroke="#f0c020" strokeWidth="1.500" /></svg>
        </div>
        <div className="w-[44px] flex justify-center">
          <svg viewBox="0 0 22 22" className="w-[22px] h-[22px]"><path d="M1 2h8l2 3h10v15H1z" fill="#f7cf5d" /><path d="M1 2h8v4H1z" fill="#fbe59a" /><rect x="7" y="13" width="8" height="7" fill="#4aa8e0" /></svg>
        </div>
        <div className="w-[42px] flex justify-center">
          <svg viewBox="0 0 22 26" className="w-[22px] h-[26px]"><path d="M18 5C14 0 5 1 2 8c-2 6 1 12 6 15 5 2 11-1 12-6h-7c3-2 8-6 8-9-4 1-9 3-11 4 2-4 5-6 8-7z" fill="#1e88e5" /></svg>
        </div>
        <div className="w-[44px] flex justify-center">
          <svg viewBox="0 0 24 24" className="w-6 h-6"><rect width="24" height="24" rx="3" fill="#0d47a1" /><rect x="5" y="5" width="14" height="14" fill="#8ec5f0" /><circle cx="11" cy="10" r="3" fill="#1c63b7" /><path d="M5 17l5-3 5 2 4-3v6H5z" fill="#e8b050" /></svg>
        </div>
        <div className="w-[40px] h-full bg-[#3a4246] flex items-center justify-center">
          <svg viewBox="0 0 24 24" className="w-6 h-6"><rect width="24" height="24" rx="4" fill="#0a84e8" /><path d="M12 5v9M7 10c-3 0-3 4 0 4s5-1 5-1 2 1 5 1 3-4 0-4M12 14c0 3 0 5 0 5" fill="none" stroke="#fff" strokeWidth="2" /></svg>
        </div>
        <div className="w-[44px] flex justify-center">
          <svg viewBox="0 0 24 24" className="w-6 h-6"><rect width="24" height="24" fill="#f19c1c" /><rect x="4" y="5" width="16" height="16" fill="#fbe7c0" /><path d="M6 9h10M6 12h10M6 15h8" stroke="#b07820" /><path d="M14 16L22 2" stroke="#d03018" strokeWidth="2" /></svg>
        </div>
        <div className="w-[40px] flex justify-center">
          <svg viewBox="0 0 24 26" className="w-[22px] h-6"><circle cx="11" cy="14" r="10.500" fill="#6fbf30" /><circle cx="11" cy="14" r="7" fill="#e8f7d8" /><path d="M11 9l-4 4h8zM7 15h8l-4 4z" fill="#4d9e1e" /><path d="M16 3l5-2" stroke="#6fbf30" strokeWidth="2" /></svg>
        </div>
        <div className="w-[50px] text-center text-[#c8c8c8] text-[12px]">链接</div>
        <div className="w-[62px] text-center text-[12px] leading-[18px] text-[#e8e8e8]"><div>7%</div><div>CPU使用</div></div>
        <div className="ml-[6px] w-[24px] flex justify-center">
          <svg viewBox="0 0 12 7" className="w-3 h-[7px]"><path d="M0.500 6.500L6 1l5.500 5.500" fill="none" stroke="#fff" /></svg>
        </div>
        <div className="w-[26px] flex justify-center">
          <svg viewBox="0 0 18 14" className="w-4 h-3"><rect x="3" y="4" width="13" height="9" fill="none" stroke="#fff" /><rect x="5" y="6" width="7" height="5" fill="#fff" /><path d="M1 1v3M4 1v3" stroke="#fff" /></svg>
        </div>
        <div className="w-[24px] flex justify-center">
          <svg viewBox="0 0 16 16" className="w-[15px] h-[15px]"><g fill="none" stroke="#cfcfcf"><path d="M2 15C2 8 8 2 15 2" /><path d="M5 15c0-5 5-10 10-10" /><path d="M8 15c0-4 3-7 7-7" /></g><circle cx="12" cy="13" r="1.500" fill="#fff" /></svg>
        </div>
        <div className="w-[20px] flex justify-center">
          <svg viewBox="0 0 16 16" className="w-[15px] h-[15px]"><path d="M1 6h3l4-4v12l-4-4H1z" fill="none" stroke="#fff" /><path d="M11 5c1 2 1 4 0 6M13 3c2 3 2 7 0 10" fill="none" stroke="#ddd" /></svg>
        </div>
        <div className="w-[36px] flex justify-center">
          <svg viewBox="0 0 24 16" className="w-[23px] h-[15px]"><rect x="0.500" y="0.500" width="23" height="15" fill="none" stroke="#fff" /><path d="M3 4h18M3 7h18M3 10h18" stroke="#fff" strokeDasharray="1.500 1" /><path d="M6 13h12" stroke="#fff" /></svg>
        </div>
        <div className="w-[20px] text-center text-[13px]">中</div>
        <div className="w-[36px] flex justify-center">
          <span className="w-[15px] h-[18px] rounded-[3px] bg-[#e5451e] text-white text-[13px] leading-[18px] font-bold text-center [font-family:'Liberation_Sans',sans-serif]">S</span>
        </div>
        <div className="w-[74px] text-center text-[12px] leading-[18px]"><div>18:09</div><div>2018/4/28</div></div>
        <div className="w-[40px] flex justify-center">
          <svg viewBox="0 0 16 16" className="w-4 h-4"><path d="M0.500 0.500h15v11h-5L8 15l-2.500-3.500h-5z" fill="none" stroke="#fff" /></svg>
        </div>
        {/* running-app indicators */}
        <div className="absolute left-[687px] bottom-0 w-[34px] h-[2px] bg-[#76b9ed]" />
        <div className="absolute left-[730px] bottom-0 w-[34px] h-[2px] bg-[#76b9ed]" />
        <div className="absolute left-[773px] bottom-0 w-[34px] h-[2px] bg-[#76b9ed]" />
        <div className="absolute left-[811px] bottom-0 w-[41px] h-[2px] bg-[#76b9ed]" />
        <div className="absolute left-[857px] bottom-0 w-[33px] h-[2px] bg-[#76b9ed]" />
        <div className="absolute left-[899px] bottom-0 w-[32px] h-[2px] bg-[#76b9ed]" />
      </div>

      {/* Sogou input bar */}
      <div className="absolute left-[703px] top-0 flex items-start">
        <div className="mt-[3px] ml-[25px] w-[180px] h-[24px] bg-white border border-[#b8d4ea] flex items-center text-[#1b74c5] absolute left-0 top-0">
          <span className="ml-[6px] font-bold text-[14px] leading-none">中</span>
          <span className="ml-[8px] font-bold text-[13px] leading-none">°,</span>
          <svg viewBox="0 0 16 16" className="w-4 h-4 ml-[6px]"><circle cx="8" cy="8" r="7" fill="none" stroke="#1b74c5" strokeWidth="1.500" /><circle cx="6" cy="6.500" r="1" fill="#1b74c5" /><circle cx="10" cy="6.500" r="1" fill="#1b74c5" /><path d="M5 10c2 2 4 2 6 0" fill="none" stroke="#1b74c5" /></svg>
          <svg viewBox="0 0 12 16" className="w-3 h-4 ml-[8px]"><rect x="3.500" y="1" width="5" height="9" rx="2.500" fill="#1b74c5" /><path d="M1.500 7c0 5 9 5 9 0M6 12v3M3 15h6" fill="none" stroke="#1b74c5" /></svg>
          <svg viewBox="0 0 16 14" className="w-4 h-[14px] ml-[8px]"><rect width="16" height="13" rx="1" fill="#1b74c5" /><path d="M2 3h12M2 6h12M4 10h8" stroke="#fff" strokeDasharray="1.500 1" /></svg>
          <svg viewBox="0 0 16 16" className="w-4 h-4 ml-[9px]"><circle cx="6" cy="4" r="3" fill="#9db6cc" /><path d="M1 15c0-5 3-6 5-6s4 1 4 2v4z" fill="#9db6cc" /><rect x="8" y="9" width="8" height="6" fill="#fff" stroke="#9db6cc" /></svg>
          <svg viewBox="0 0 16 16" className="w-4 h-4 ml-[4px]"><path d="M1 3l4-2 3 1 3-1 4 2-2 4-1-1v9H4V6L3 7z" fill="#1b74c5" /></svg>
          <svg viewBox="0 0 16 16" className="w-[15px] h-[15px] ml-[6px]"><path d="M15 4c0 3-3 5-6 4l-6 7-2-2 7-6c-1-3 1-6 4-6L10 4l2 2z" fill="#1b74c5" /></svg>
        </div>
        <div className="relative w-[27px] h-[27px] rounded-[6px] bg-[#ea5a24] text-white flex items-center justify-center font-bold text-[24px] leading-none [font-family:'Liberation_Sans',sans-serif] -rotate-6">S</div>
      </div>

      {/* hand-drawn red ellipses */}
      <svg viewBox="0 0 1366 768" className="absolute left-0 top-0 w-[1366px] h-[768px] pointer-events-none">
        <g fill="none" stroke="#f00000" strokeWidth="3">
          <path d="M307 270C307 250 470 243 560 245C640 247 717 255 717 270C717 285 640 292 540 296C450 298 307 290 307 270Z" />
          <path d="M338 318C338 302 480 298 560 298C640 298 698 306 698 317C698 328 600 335 520 335C440 336 338 330 338 318Z" />
        </g>
      </svg>

      {/* dialog */}
      <div className="absolute left-[766px] top-[121px] w-[680px] h-[418px] bg-[#f0f0f0] border border-[#3a8fdc] shadow-[0_3px_14px_rgba(0,0,0,0.35)] flex flex-col text-black">
        <div className={"h-[25px] bg-white pl-[3px] text-[12px] leading-[22px] shrink-0 " + sim}>马凳筋设置</div>
        <div className="flex h-[348px] shrink-0 pl-[8px]">
          <div className="w-[321px] shrink-0 flex flex-col">
            <div className="relative mt-[14px] h-[137px] border border-[#dadada] pl-[7px] pt-[7px]">
              <span className={"absolute left-[7px] -top-[8px] bg-[#f0f0f0] text-[12px] leading-[15px] " + sim}>选择马凳筋图形</span>
              <div className="w-[305px] h-[123px] bg-[#c0c0c0] flex gap-[4px]">
                <Thumb x={783} y={169} sel>
                  <path d="M798 227L817 237V217L844 211V234L865 240" fill="none" stroke={W} strokeWidth="1.500" />
                  <TL x={825} y={229} t="L1" /><TL x={859} y={227} t="L2" /><TL x={793} y={246} t="L3" />
                  <TB x={790} w={87} t="I 型 单位：mm" />
                </Thumb>
                <Thumb x={884} y={169}>
                  <path d="M898 235L958 218M917 231V242M909 242H926M943 223V234M935 234H952" fill="none" stroke={W} strokeWidth="1.500" />
                  <TL x={915} y={219} t="L1" /><TL x={959} y={233} t="L2" /><TL x={926} y={247} t="L3" />
                  <TB x={889} w={89} t="II型 单位：mm" />
                </Thumb>
                <Thumb x={985} y={169}>
                  <path d="M999 236L1062 215M1022 230L1015 243H1029ZM1010 243H1032M1046 220L1041 233H1051ZM1034 233H1059" fill="none" stroke={W} strokeWidth="1.500" />
                  <TL x={1016} y={218} t="L1" s={13} /><TL x={1061} y={229} t="L3" s={13} /><TL x={1036} y={248} t="L2" s={13} />
                  <TB x={987} w={95} t="III型 单位：mm" />
                </Thumb>
              </div>
            </div>
            <div className={"mt-[9px] h-[188px] bg-white border border-[#b0b0b0] pl-px pt-px " + sim}>
              <div className="flex h-[19px] w-[210px] bg-gradient-to-b from-[#fafafa] to-[#ececec] border-b border-[#b4b4b4]">
                <div className="w-[21px] border-r border-[#ddd]" />
                <div className="w-[72px] bg-gradient-to-b from-[#fbdfa9] to-[#f3c26b]" />
                <div className="w-[117px] border-r border-[#b4b4b4]" />
              </div>
              <div className="flex h-[19px] w-[210px] border-b border-[#b4b4b4] text-[12px] leading-[18px]">
                <div className="w-[21px] bg-[#ffd58f]" />
                <div className="w-[72px] bg-[#d8e9f9] border-r border-[#b4b4b4] pl-[2px]">马凳筋信息</div>
                <div className="w-[117px] border-r border-[#b4b4b4] pl-[4px]"><Sim t="ф6@1000*1000" /></div>
              </div>
            </div>
          </div>
          <div className="ml-[16px] mt-[9px] w-[300px] h-[339px] shrink-0 border-2 border-[#a8a8a8] border-r-0 bg-black overflow-hidden">
            <svg viewBox="1114 158 298 337" className="w-[298px] h-[337px]">
              <path d="M1173 323L1224 350V292L1307 274V342L1363 361" fill="none" stroke={W} strokeWidth="2" />
              <path d="M1225 309L1307 289M1313 273H1412M1310 342H1412M1341 274V342M1163 333L1216 363M1173 323L1155 343M1224 350L1211 372" fill="none" stroke={W} strokeWidth="0.800" />
              <path d="M1225 309L1245 300L1245 310ZM1307 289L1288 288L1291 299ZM1341 274L1335 292H1347ZM1341 342L1335 322H1347ZM1163 333L1173 346L1183 337ZM1216 363L1197 352L1196 362Z" fill={W} />
              <text x="1256" y="318" fontSize="16" fill="#00ff00" fontFamily="Liberation Mono, monospace" textLength="26">200</text>
              <text x="1165" y="362" fontSize="16" fill="#00ff00" fontFamily="Liberation Mono, monospace" textLength="26">150</text>
              <text x="1347" y="310" fontSize="16" fill="#00ff00" fontFamily="Liberation Mono, monospace" textLength="26">110</text>
              <text x="1209" y="445" fontSize="18" fill="#fff" fontFamily="Liberation Serif, Noto Sans CJK SC, serif" xmlSpace="preserve">I 型 单位： mm</text>
            </svg>
          </div>
        </div>
        <div className="flex items-center h-[21px] mt-[13px] pl-[8px] shrink-0">
          <div className={"w-[490px] shrink-0 whitespace-nowrap text-[12px] " + sim}><Sim t="一型钢筋输入格式:数量+级别+直径或级别+直径+间距*间距，如200B12或B12@1000*1000" /></div>
          <div className="w-[72px] h-[21px] shrink-0 border-2 border-[#0078d7] bg-[#e1e1e1] flex items-center justify-center text-[12px]">确定</div>
          <div className="ml-[15px] w-[72px] h-[21px] shrink-0 border border-[#adadad] bg-[#e1e1e1]" />
        </div>
      </div>
    </div>
  );
}
